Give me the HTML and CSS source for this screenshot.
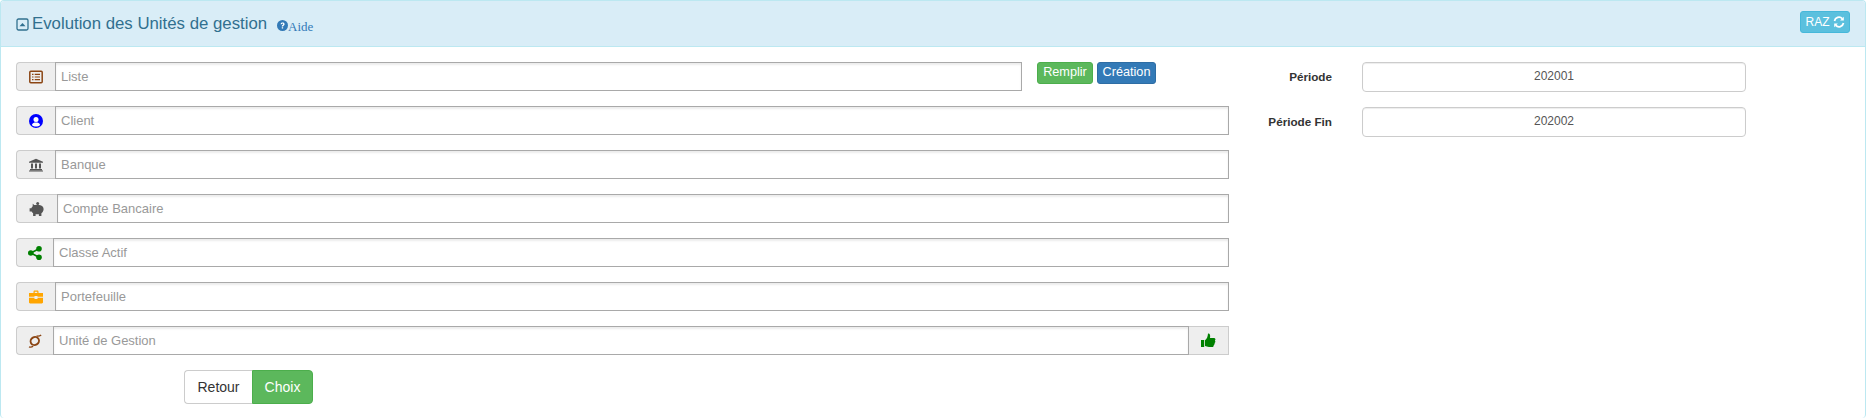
FILE: index.html
```html
<!DOCTYPE html>
<html lang="fr">
<head>
<meta charset="utf-8">
<title>Evolution des Unités de gestion</title>
<link rel="stylesheet" href="styles.css">
</head>
<body>
<section class="panel">
  <header class="panel-head">
    <div class="title-wrap">
      <svg class="ic-title" viewBox="0 0 13 13"><rect x="1" y="1" width="11" height="11" rx="1.500" fill="none" stroke="#31708f" stroke-width="1.300"/><path d="M3.500 8.200 6.500 5l3 3.200z" fill="#31708f"/></svg>
      <h1 class="title">Evolution des Unités de gestion</h1>
      <a class="help"><svg class="ic-help" viewBox="0 0 12 12"><circle cx="6" cy="6" r="6" fill="#337ab7"/><path d="M3.900 4.600C4 3.400 4.900 2.700 6.100 2.700c1.300 0 2.200.7 2.200 1.800 0 1.500-1.600 1.400-1.600 2.500H5.200c0-1.800 1.500-1.700 1.500-2.500 0-.4-.3-.6-.7-.6-.4 0-.7.300-.8.800zM5.200 7.800h1.500v1.500H5.200z" fill="#fff"/></svg><span class="help-text">Aide</span></a>
    </div>
    <button class="btn-raz">RAZ <svg class="ic-refresh" viewBox="0 0 12 12"><path d="M1.500 5A4.600 4.600 0 0 1 9.300 2.600" fill="none" stroke="#fff" stroke-width="1.700"/><path d="M10.800 .8v3.700H7.100z" fill="#fff"/><path d="M10.500 7A4.600 4.600 0 0 1 2.700 9.400" fill="none" stroke="#fff" stroke-width="1.700"/><path d="M1.200 11.200V7.500h3.700z" fill="#fff"/></svg></button>
  </header>
  <div class="panel-body">
    <div class="col-left">
      <div class="row-first">
        <div class="group group-list">
          <span class="addon w39"><svg class="ic" viewBox="0 0 14 14"><rect x=".8" y="1.300" width="12.400" height="11.400" rx="1" fill="none" stroke="#8b4513" stroke-width="1.500"/><path d="M3 4.300h1.500M3 7h1.500M3 9.700h1.500M5.700 4.300H11M5.700 7H11M5.700 9.700H11" stroke="#8b4513" stroke-width="1.200"/></svg></span>
          <input class="field" placeholder="Liste">
        </div>
        <button class="btn-sm green">Remplir</button>
        <button class="btn-sm blue">Création</button>
      </div>
      <div class="group">
        <span class="addon w39"><svg class="ic" viewBox="0 0 14 14"><circle cx="7" cy="7" r="7" fill="#0000ff"/><circle cx="7" cy="5.400" r="2.500" fill="#fff"/><path d="M2.800 11c.7-1.800 2.300-2.400 4.200-2.400s3.500.6 4.200 2.400C10 12.100 8.600 12.600 7 12.600S4 12.100 2.800 11z" fill="#fff"/></svg></span>
        <input class="field" placeholder="Client">
      </div>
      <div class="group">
        <span class="addon w39"><svg class="ic" viewBox="0 0 14 14"><path d="M7 .8 14 3.800v1H0v-1zM1 11h12v1.200H1zM0 12.400h14v1.100H0zM2 5.400h2v5H2zM6 5.400h2v5H6zM10 5.400h2v5h-2z" fill="#555"/></svg></span>
        <input class="field" placeholder="Banque">
      </div>
      <div class="group">
        <span class="addon w41"><svg class="ic ic-wide" viewBox="0 0 16 14"><path d="M5.300 3 3.700 1.700v2.500C3 4.800 2.600 5.500 2.300 6.300H.6v3.300h2c.4.700.9 1.200 1.500 1.600V14h2.500v-1.700h3.300V14h2.500v-2.800c1.300-1 2.200-2.500 2.200-4C14.600 4.300 12 3 9.300 3z" fill="#555"/><circle cx="8.700" cy="1.500" r="1.500" fill="#555"/></svg></span>
        <input class="field" placeholder="Compte Bancaire">
      </div>
      <div class="group">
        <span class="addon w37"><svg class="ic" viewBox="0 0 14 14"><circle cx="11" cy="2.800" r="2.800" fill="#008000"/><circle cx="11" cy="11.200" r="2.800" fill="#008000"/><circle cx="2.800" cy="7" r="2.800" fill="#008000"/><path d="M11 2.800 2.800 7l8.200 4.200" fill="none" stroke="#008000" stroke-width="1.600"/></svg></span>
        <input class="field" placeholder="Classe Actif">
      </div>
      <div class="group">
        <span class="addon w39"><svg class="ic" viewBox="0 0 14 14"><path d="M4.500 3V1.700C4.500 1 5 .6 5.600.6h2.800c.6 0 1.100.4 1.100 1.100V3H14v3.800H8.500V6h-3v.8H0V3zM5.700 3h2.600V1.800H5.700zM0 7.800h5.500V9h3V7.800H14v4.400c0 .7-.5 1.200-1.200 1.200H1.200C.5 13.400 0 12.900 0 12.200z" fill="#ffa500"/></svg></span>
        <input class="field" placeholder="Portefeuille">
      </div>
      <div class="group">
        <span class="addon w37"><svg class="ic" viewBox="0 0 14 14"><ellipse cx="6.800" cy="7" rx="4.300" ry="3.900" transform="rotate(-30 6.800 7)" fill="none" stroke="#8b4513" stroke-width="1.900"/><path d="M1 12.900c1.200.5 3 .2 4.200-.6M8.600 2c1.600.3 3.600-.2 4.600-1" fill="none" stroke="#8b4513" stroke-width="1.300"/></svg></span>
        <input class="field" placeholder="Unité de Gestion">
        <span class="addon-right"><svg class="ic ic-thumb" viewBox="0 0 15 15"><path d="M0 7h3.200v7H0z" fill="#008000"/><path d="M4 7.200C6 6 6.800 3.500 7 .6c1.800-.3 2.600 1.500 2 4.400h4c1.400 0 2 1.700.9 2.600.8 1 .5 2-.3 2.500.3 1-.2 1.800-.9 2.100.2 1-.5 1.800-1.600 1.800H8c-1.600 0-2.800-.5-4-.9z" fill="#008000"/></svg></span>
      </div>
      <div class="actions">
        <button class="btn-back">Retour</button>
        <button class="btn-choice">Choix</button>
      </div>
    </div>
    <div class="col-right">
      <div class="period"><label class="period-label">Période</label><input class="period-input" value="202001"></div>
      <div class="period"><label class="period-label">Période Fin</label><input class="period-input" value="202002"></div>
    </div>
  </div>
</section>
</body>
</html>
```
FILE: styles.css
```css
* { box-sizing: border-box; }
html, body { margin: 0; padding: 0; background: #fff; }
body { font-family: "Liberation Sans", Arial, sans-serif; color: #333; }
.panel { height: 418px; border: 1px solid #bce8f1; border-bottom: 0; border-radius: 4px; overflow: hidden; }
.panel-head { height: 46px; background: #d9edf7; border-bottom: 1px solid #bce8f1; display: flex; justify-content: space-between; align-items: flex-start; padding: 10px 15px 0; }
.title-wrap { display: flex; align-items: center; height: 26px; color: #31708f; }
.ic-title { width: 13px; height: 13px; margin-right: 3px; }
.title { margin: 0; font-size: 16.8px; font-weight: 400; color: #31708f; }
.help { display: flex; align-items: center; margin-left: 10px; margin-top: 2px; color: #337ab7; }
.ic-help { width: 11px; height: 11px; }
.help-text { font-family: "Liberation Serif", serif; font-size: 13px; margin-top: 3px; }
.btn-raz { width: 50px; height: 22px; border: 1px solid #46b8da; border-radius: 3px; background: #5bc0de; color: #fff; font: 12px "Liberation Sans", sans-serif; padding: 0; display: flex; align-items: center; justify-content: center; gap: 3px; }
.ic-refresh { width: 12px; height: 12px; }
.panel-body { display: flex; padding: 15px 15px 0; }
.col-left { width: 1213px; flex: none; display: flex; flex-direction: column; gap: 15px; }
.row-first { display: flex; align-items: flex-start; }
.group { display: flex; height: 29px; }
.group-list { width: 1006px; margin-right: 15px; }
.addon { flex: none; display: flex; align-items: center; justify-content: center; background: #eee; border: 1px solid #ccc; border-right: 0; border-radius: 4px 0 0 4px; }
.w37 { width: 37px; } .w39 { width: 39px; } .w41 { width: 41px; }
.ic { width: 14px; height: 14px; }
.ic-wide { width: 16px; }
.ic-thumb { width: 15px; height: 15px; }
.field { flex: 1; min-width: 0; height: 29px; border: 1px solid #a9a9a9; padding: 0 5px 1px; font: 13px "Liberation Sans", sans-serif; background: #fff; box-shadow: inset 0 2px 2px rgba(0,0,0,.08); outline: 0; }
.field::placeholder { color: #999; opacity: 1; }
.addon-right { flex: none; width: 40px; display: flex; align-items: center; justify-content: center; background: #eee; border: 1px solid #ccc; border-left: 0; }
.btn-sm { height: 22px; border-radius: 3px; color: #fff; font: 12.7px "Liberation Sans", sans-serif; padding: 0 0 2px; }
.green { width: 56px; background: #5cb85c; border: 1px solid #4cae4c; margin-right: 4px; }
.blue { width: 59px; background: #337ab7; border: 1px solid #2e6da4; }
.actions { display: flex; margin-left: 168px; }
.btn-back { width: 68px; height: 34px; background: #fff; border: 1px solid #ccc; border-right: 0; border-radius: 4px 0 0 4px; color: #333; font: 14px "Liberation Sans", sans-serif; padding: 0; }
.btn-choice { width: 61px; height: 34px; background: #5cb85c; border: 1px solid #4cae4c; border-radius: 0 4px 4px 0; color: #fff; font: 14px "Liberation Sans", sans-serif; padding: 0; }
.col-right { margin-left: 1px; display: flex; flex-direction: column; gap: 15px; }
.period { display: flex; align-items: center; height: 30px; }
.period-label { width: 102px; text-align: right; font-size: 11.7px; font-weight: 700; color: #333; margin-right: 30px; padding-bottom: 2px; }
.period-input { width: 384px; height: 30px; border: 1px solid #ccc; border-radius: 4px; padding: 0 0 2px; font: 12px "Liberation Sans", sans-serif; color: #555; text-align: center; box-shadow: inset 0 1px 1px rgba(0,0,0,.075); outline: 0; }
```
